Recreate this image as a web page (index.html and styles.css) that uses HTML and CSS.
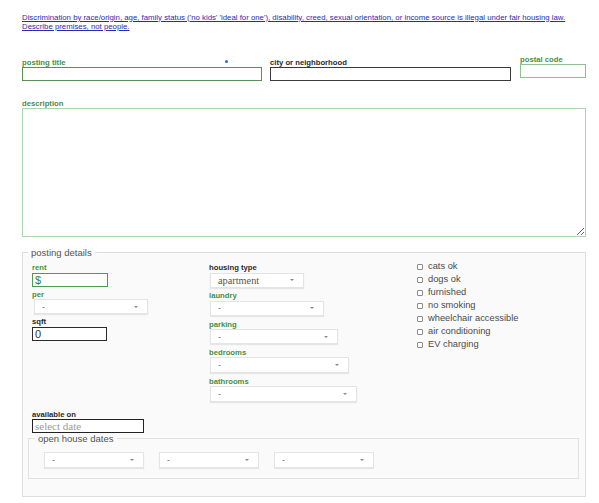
FILE: index.html
```html
<!DOCTYPE html>
<html lang="en">
<head>
<meta charset="utf-8">
<title>posting form</title>
<link rel="stylesheet" href="styles.css">
</head>
<body>
<div class="page">
  <p class="notice">
    <a href="#">Discrimination by race/origin, age, family status ('no kids' 'ideal for one'), disability, creed, sexual orientation, or income source is illegal under fair housing law.</a><br>
    <a href="#">Describe premises, not people.</a>
  </p>

  <div class="top-row">
    <div class="field field-title">
      <label class="lbl lbl-green">posting title</label>
      <span class="dot"></span>
      <input class="text-input input-title" type="text">
    </div>
    <div class="field field-city">
      <label class="lbl">city or neighborhood</label>
      <input class="text-input input-city" type="text">
    </div>
    <div class="field field-postal">
      <label class="lbl lbl-green">postal code</label>
      <input class="text-input input-postal" type="text">
    </div>
  </div>

  <div class="desc">
    <label class="lbl lbl-green">description</label>
    <textarea class="desc-box"></textarea>
  </div>

  <fieldset class="details">
    <legend class="legend">posting details</legend>
    <div class="details-grid">
      <div class="col col-1">
        <div class="field-sm">
          <label class="lbl lbl-green">rent</label>
          <input class="text-input input-rent" type="text" value="$">
        </div>
        <div class="field-sm">
          <label class="lbl lbl-green">per</label>
          <div class="select sel-per"><span>-</span><span class="caret"></span></div>
        </div>
        <div class="field-sm">
          <label class="lbl">sqft</label>
          <input class="text-input input-sqft" type="text" value="0">
        </div>
      </div>
      <div class="col col-2">
        <div class="field-md">
          <label class="lbl">housing type</label>
          <div class="select sel-housing"><span class="serif-val">apartment</span><span class="caret"></span></div>
        </div>
        <div class="field-md">
          <label class="lbl lbl-green">laundry</label>
          <div class="select sel-laundry"><span>-</span><span class="caret"></span></div>
        </div>
        <div class="field-md">
          <label class="lbl lbl-green">parking</label>
          <div class="select sel-parking"><span>-</span><span class="caret"></span></div>
        </div>
        <div class="field-md">
          <label class="lbl lbl-green">bedrooms</label>
          <div class="select sel-bedrooms"><span>-</span><span class="caret"></span></div>
        </div>
        <div class="field-md">
          <label class="lbl lbl-green">bathrooms</label>
          <div class="select sel-bathrooms"><span>-</span><span class="caret"></span></div>
        </div>
      </div>
      <div class="col checks">
        <div class="check"><span class="box"></span>cats ok</div>
        <div class="check"><span class="box"></span>dogs ok</div>
        <div class="check"><span class="box"></span>furnished</div>
        <div class="check"><span class="box"></span>no smoking</div>
        <div class="check"><span class="box"></span>wheelchair accessible</div>
        <div class="check"><span class="box"></span>air conditioning</div>
        <div class="check"><span class="box"></span>EV charging</div>
      </div>
    </div>

    <div class="avail">
      <label class="lbl">available on</label>
      <input class="text-input input-date" type="text" placeholder="select date">
    </div>

    <fieldset class="open-house">
      <legend class="legend legend-inner">open house dates</legend>
      <div class="oh-row">
        <div class="select sel-oh"><span>-</span><span class="caret"></span></div>
        <div class="select sel-oh"><span>-</span><span class="caret"></span></div>
        <div class="select sel-oh"><span>-</span><span class="caret"></span></div>
      </div>
    </fieldset>
  </fieldset>
</div>
</body>
</html>
```

FILE: styles.css
```css
html, body {
  margin: 0;
  padding: 0;
  background: #ffffff;
}

body {
  font-family: "Liberation Sans", Arial, sans-serif;
  color: #222;
}

.page {
  width: 564px;
  padding: 12.5px 13px 0 22px;
}

.notice {
  margin: 0;
  font-size: 7.8px;
  line-height: 9px;
  color: #2b2bb0;
  white-space: nowrap;
}

.notice a {
  color: #2b2bb0;
  text-decoration: underline;
}

.top-row {
  display: flex;
  align-items: flex-end;
  margin-top: 24px;
}

.field {
  position: relative;
}

.field-title {
  width: 240px;
  margin-right: 8px;
}

.field-city {
  width: 241px;
  margin-right: 9px;
}

.field-postal {
  width: 66px;
  margin-bottom: 3px;
}

.dot {
  position: absolute;
  left: 203px;
  top: 2px;
  width: 3px;
  height: 3px;
  border-radius: 50%;
  background: #1f6fd6;
}

.lbl {
  display: block;
  font-size: 7.7px;
  font-weight: bold;
  line-height: 9px;
  color: #2a2a2a;
  white-space: nowrap;
}

.lbl-green {
  color: #469043;
}

.text-input {
  display: block;
  box-sizing: border-box;
  height: 14px;
  margin: 0.5px 0 0 0;
  padding: 0 2px;
  border: 1px solid #333;
  border-radius: 0;
  background: #fff;
  outline: none;
  font-family: "Liberation Sans", Arial, sans-serif;
  font-size: 11px;
  color: #333;
}

.input-title {
  width: 240px;
  border-color: #5a8f5a;
}

.input-city {
  width: 241px;
  border-color: #3a3a3a;
}

.input-postal {
  width: 66px;
  border-color: #8fc28f;
}

.desc {
  margin-top: 17.5px;
}

.desc-box {
  display: block;
  box-sizing: border-box;
  width: 564px;
  height: 129px;
  margin: 0;
  padding: 2px;
  border: 1px solid #add5ad;
  background: #fff;
  resize: both;
  outline: none;
}

.details {
  margin: 11px 0 0 0;
  padding: 5.5px 6px 17px 5px;
  border: 1px solid #dedede;
  background: #fafafa;
  min-width: 0;
}

.legend {
  padding: 0 3px;
  font-size: 9.5px;
  line-height: 10px;
  color: #555;
}

.details-grid {
  display: grid;
  grid-template-columns: 177px 208px 1fr;
  padding-left: 4px;
}

.field-sm {
  margin-bottom: 3px;
}

.field-sm:last-child {
  margin-bottom: 0;
}

.field-md {
  margin-bottom: 3.8px;
}

.field-md:last-child {
  margin-bottom: 0;
}

.input-rent {
  width: 76px;
  border-color: #4f9a4f;
  color: #3d7d3d;
  font-size: 11px;
  line-height: 12px;
}

.input-sqft {
  width: 75px;
  border-color: #2a2a2a;
  margin-top: 1px;
}

.select {
  display: flex;
  align-items: center;
  justify-content: space-between;
  box-sizing: border-box;
  height: 15px;
  margin-top: 0.5px;
  padding: 0 9px 0 7px;
  border: 1px solid #e4e4e4;
  background: #fff;
  box-shadow: 0 1px 1px rgba(0, 0, 0, 0.08);
  font-size: 9px;
  color: #666;
}

.serif-val {
  font-family: "Liberation Serif", "Times New Roman", serif;
  font-size: 10.3px;
  color: #555;
}

.caret {
  width: 0;
  height: 0;
  border-left: 2px solid transparent;
  border-right: 2px solid transparent;
  border-top: 2.5px solid #888;
}

.sel-per {
  width: 114px;
  margin-left: 2px;
}

.col-2 .select {
  margin-left: 1px;
}

.sel-housing {
  width: 94px;
}

.sel-laundry {
  width: 114px;
}

.sel-parking {
  width: 128px;
}

.sel-bedrooms {
  width: 139px;
  height: 15.5px;
}

.sel-bathrooms {
  width: 147px;
  height: 15.5px;
}

.checks {
  margin-top: -3px;
  font-size: 9.3px;
  line-height: 13px;
  color: #4a4a4a;
}

.check {
  display: flex;
  align-items: center;
  white-space: nowrap;
}

.box {
  box-sizing: border-box;
  width: 6px;
  height: 6px;
  margin-right: 5px;
  border: 1px solid #8a8a8a;
  border-radius: 1px;
  background: #fff;
}

.avail {
  margin-top: 8px;
  padding-left: 4px;
}

.input-date {
  width: 112px;
  border-color: #222;
  font-family: "Liberation Serif", "Times New Roman", serif;
  font-size: 11px;
}

.input-date::placeholder {
  color: #9a9a9a;
  font-family: "Liberation Serif", "Times New Roman", serif;
}

.open-house {
  margin: 0.5px 0 0 0;
  padding: 8px 6px 10px 6px;
  border: 1px solid #e2e2e2;
  min-width: 0;
}

.oh-row {
  display: flex;
  gap: 15px;
  padding-left: 9px;
}

.sel-oh {
  width: 100px;
  height: 16px;
  margin-top: 0;
}
```
